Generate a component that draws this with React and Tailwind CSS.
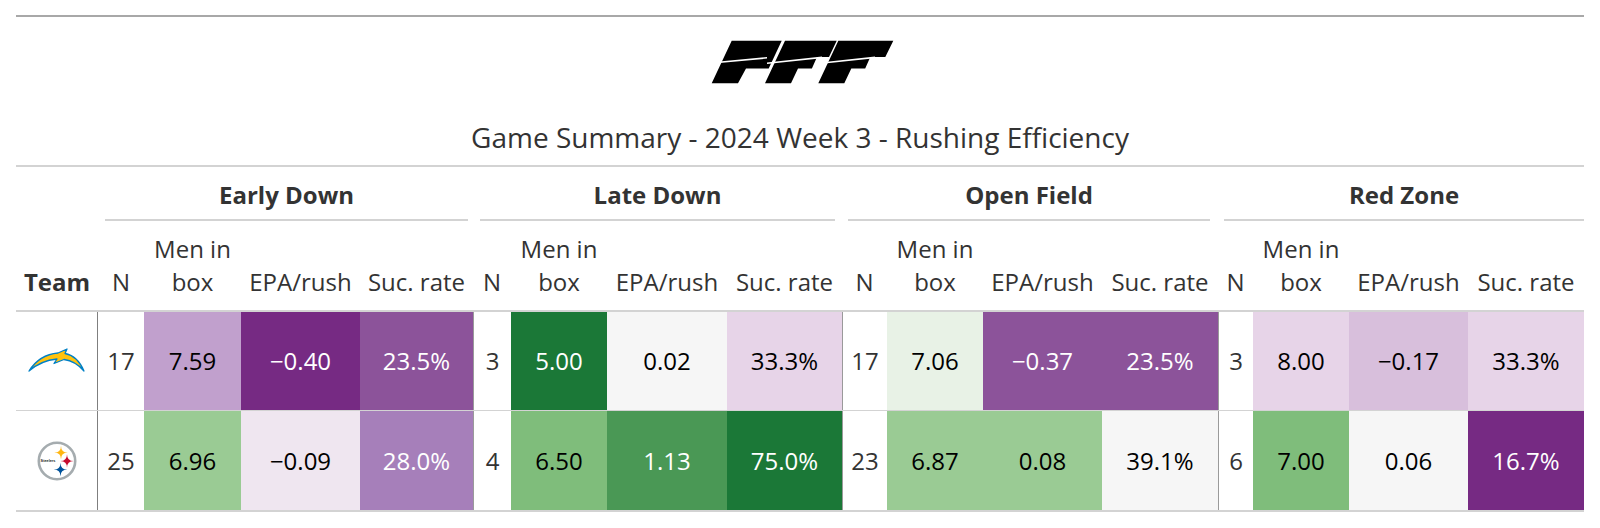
import React from "react";

const groups = [
  { name: "Early Down", w: "w-[375px]", sp: "pl-[7px] pr-[5px]", cols: ["w-[46px]", "w-[97px]", "w-[119px]", "w-[113px]"], first: true },
  { name: "Late Down", w: "w-[369px]", sp: "pl-[7px] pr-[7px]", cols: ["w-[38px]", "w-[96px]", "w-[120px]", "w-[115px]"] },
  { name: "Open Field", w: "w-[376px]", sp: "pl-[6px] pr-[8px]", cols: ["w-[45px]", "w-[96px]", "w-[119px]", "w-[116px]"] },
  { name: "Red Zone", w: "w-[366px]", sp: "pl-[6px] pr-0", cols: ["w-[35px]", "w-[96px]", "w-[119px]", "w-[116px]"] },
];

const rows = [
  {
    logo: "lac",
    cells: [
      ["17", ["7.59", "bg-[#c1a0cd]", false], ["\u22120.40", "bg-[#762a83]", true], ["23.5%", "bg-[#8c539a]", true]],
      ["3", ["5.00", "bg-[#1b7837]", true], ["0.02", "bg-[#f6f6f6]", false], ["33.3%", "bg-[#e7d4e8]", false]],
      ["17", ["7.06", "bg-[#e8f2e6]", false], ["\u22120.37", "bg-[#8c539a]", true], ["23.5%", "bg-[#8c539a]", true]],
      ["3", ["8.00", "bg-[#e7d4e8]", false], ["\u22120.17", "bg-[#d8bfdc]", false], ["33.3%", "bg-[#e7d4e8]", false]],
    ],
  },
  {
    logo: "pit",
    cells: [
      ["25", ["6.96", "bg-[#9acb94]", false], ["\u22120.09", "bg-[#efe6f0]", false], ["28.0%", "bg-[#a67fba]", true]],
      ["4", ["6.50", "bg-[#7fbd7b]", false], ["1.13", "bg-[#4a9855]", true], ["75.0%", "bg-[#1b7837]", true]],
      ["23", ["6.87", "bg-[#9acb94]", false], ["0.08", "bg-[#9acb94]", false], ["39.1%", "bg-[#f6f6f6]", false]],
      ["6", ["7.00", "bg-[#7fbd7b]", false], ["0.06", "bg-[#f6f6f6]", false], ["16.7%", "bg-[#762a83]", true]],
    ],
  },
];

function PFFLogo() {
  return (
    <svg width="186" height="44" viewBox="0 0 186 44" className="ml-[6px]">
      <g fill="#000">
        <polygon points="21.7,0.7 71.7,0.7 58.7,28.5 36,28.5 28,43.3 1.7,43.3" />
        <polygon points="75,0.7 126.7,0.7 119,17 107,17 101.9,28.5 88,28.5 81,43.3 55,43.3" />
        <polygon points="128.3,0.7 183.3,0.7 175.3,17 160.3,17 155.2,28.5 141.3,28.5 134.3,43.3 108.3,43.3" />
      </g>
      <g fill="#fff">
        <polygon points="4,22 57,17 57,18.6 4,23.6" />
        <polygon points="57,22.5 112,16.6 112,18.2 57,24.1" />
        <polygon points="110,22.5 165,16.6 165,18.2 110,24.1" />
      </g>
    </svg>
  );
}

function Bolt() {
  return (
    <svg width="60" height="26" viewBox="0 0 60 26">
      <path
        d="M2 23 C9 12 19 6 31 5 L40 1 L38 5.5 C47 7 53 14 57 23 C51 16 45 12.5 37 11.5 L27 15.5 L30 11 C19 12 10 16 2 23 Z"
        fill="#ffc20e"
        stroke="#0080c6"
        strokeWidth="1.3"
        strokeLinejoin="round"
      />
    </svg>
  );
}

function star(cx, cy, r) {
  return `M${cx} ${cy - r} Q${cx} ${cy} ${cx + r} ${cy} Q${cx} ${cy} ${cx} ${cy + r} Q${cx} ${cy} ${cx - r} ${cy} Q${cx} ${cy} ${cx} ${cy - r} Z`;
}

function Steelers() {
  return (
    <svg width="40" height="40" viewBox="0 0 40 40">
      <circle cx="20" cy="20" r="18.2" fill="#fff" stroke="#a5acaf" strokeWidth="2.6" />
      <path d={star(24, 11.5, 6.8)} fill="#ffb612" />
      <path d={star(30, 20, 6.8)} fill="#c60c30" />
      <path d={star(23.5, 28.5, 6.8)} fill="#00539b" />
      <text x="11" y="21.3" fontSize="3.8" fontWeight="bold" textAnchor="middle" fill="#222" fontFamily="Liberation Sans, sans-serif">
        Steelers
      </text>
    </svg>
  );
}

export default function App() {
  return (
    <div className="w-[1600px] h-[528px] bg-white font-['Open_Sans',sans-serif] text-[#333]">
      <div className="mx-[16px] pt-[15px]">
        <div className="border-t-2 border-[#a8a8a8]" />
        <div className="flex flex-col items-center pt-[23px] pb-[9px] border-b-2 border-[#d3d3d3]">
          <PFFLogo />
          <div className="mt-[34px] text-[28px] leading-[38px]">
            Game Summary - 2024 Week 3 - Rushing Efficiency
          </div>
        </div>

        <div className="flex border-b-2 border-[#d3d3d3] text-[24px]">
          <div className="w-[82px] flex items-end justify-center pb-[12px] font-bold leading-[33px]">Team</div>
          {groups.map((g) => (
            <div key={g.name} className={`${g.w} flex flex-col`}>
              <div className={`pt-[11px] ${g.sp}`}>
                <div className="text-center font-bold leading-[34px] pb-[7px] border-b-2 border-[#d3d3d3]">{g.name}</div>
              </div>
              <div className="flex items-end pt-[11px] pb-[12px] leading-[33px] text-center">
                <div className={g.cols[0]}>N</div>
                <div className={g.cols[1]}>
                  Men in
                  <br />
                  box
                </div>
                <div className={g.cols[2]}>EPA/rush</div>
                <div className={g.cols[3]}>Suc. rate</div>
              </div>
            </div>
          ))}
        </div>

        {rows.map((r, ri) => (
          <div
            key={ri}
            className={`flex text-[24px] ${ri === 0 ? "h-[99px] border-b border-[#d3d3d3]" : "h-[101px] border-b-2 border-[#d3d3d3]"}`}
          >
            <div className="w-[82px] flex items-center justify-center border-r border-[#7f7f7f]">
              {r.logo === "lac" ? <Bolt /> : <Steelers />}
            </div>
            {r.cells.map((c, gi) => (
              <div key={gi} className={`${groups[gi].w} flex ${gi > 0 ? "border-l border-[#9a9a9a]" : ""}`}>
                <div className={`${gi > 0 ? "flex-1" : groups[gi].cols[0]} flex items-center justify-center text-[#333]`}>{c[0]}</div>
                {[1, 2, 3].map((k) => (
                  <div
                    key={k}
                    className={`${groups[gi].cols[k]} ${c[k][1]} flex items-center justify-center ${c[k][2] ? "text-white" : "text-black"}`}
                  >
                    {c[k][0]}
                  </div>
                ))}
              </div>
            ))}
          </div>
        ))}
      </div>
    </div>
  );
}
